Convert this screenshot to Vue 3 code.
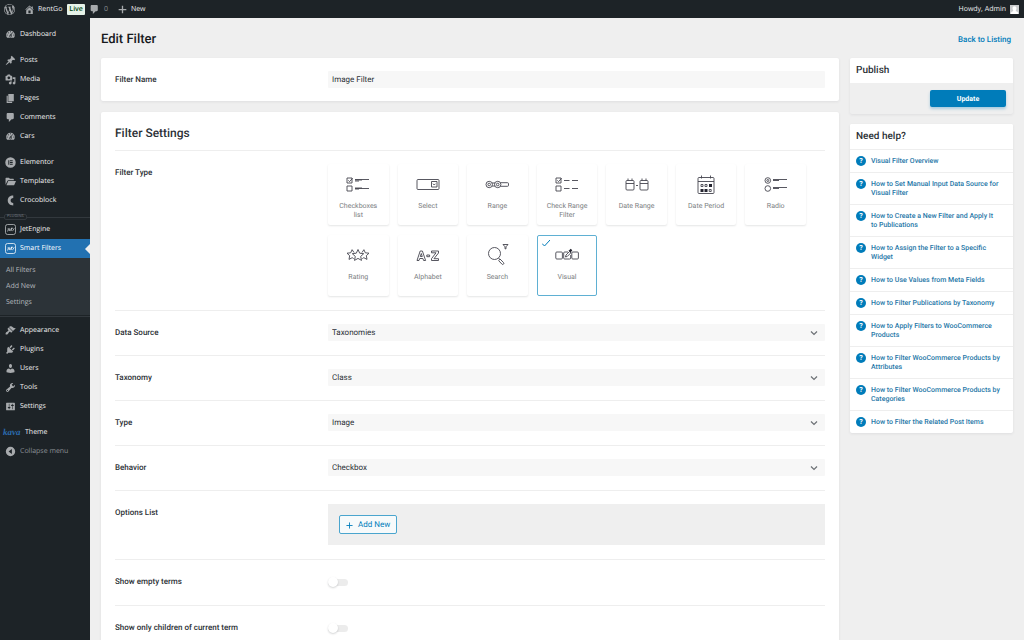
<script setup>
import { ref } from 'vue'

const icons = {
  wordpress: 'M20 10c0-5.51-4.49-10-10-10C4.48 0 0 4.49 0 10c0 5.52 4.48 10 10 10 5.51 0 10-4.48 10-10zM7.78 15.37L4.37 6.22c.55-.02 1.17-.08 1.17-.08.5-.06.44-1.13-.06-1.11 0 0-1.45.11-2.37.11-.18 0-.37 0-.58-.01C4.12 2.69 6.87 1.11 10 1.11c2.33 0 4.45.87 6.05 2.34-.68-.11-1.65.39-1.65 1.58 0 .74.45 1.36.9 2.1.35.61.55 1.36.55 2.46 0 1.49-1.4 5-1.4 5l-3.03-8.37c.54-.02.82-.17.82-.17.5-.05.44-1.25-.06-1.22 0 0-1.44.12-2.38.12-.87 0-2.33-.12-2.33-.12-.5-.03-.56 1.2-.06 1.22l.92.08 1.26 3.41zM17.41 10c.24-.64.74-1.87.43-4.25.7 1.29 1.05 2.71 1.05 4.25 0 3.29-1.73 6.24-4.4 7.78.97-2.59 1.94-5.2 2.92-7.78zM6.1 18.09C3.12 16.65 1.11 13.53 1.11 10c0-1.3.23-2.48.72-3.59C3.25 10.3 4.67 14.2 6.1 18.09zm4.03-6.63l2.58 6.98c-.86.29-1.76.45-2.71.45-.79 0-1.57-.11-2.29-.33.81-2.38 1.62-4.74 2.42-7.1z',
  home: 'M16 8.5l1.53 1.53-1.06 1.06L10 4.6l-6.47 6.49-1.06-1.06L10 2.5l4 4v-2h2v4zm-6-2.46l6 5.99V18H4v-5.97zM12 17v-5H8v5h4z',
  plus: 'M17 9v2.4h-5.8V17H8.8v-5.6H3V9h5.8V3h2.4v6z',
  dashboard: 'M3.76 16h12.48c1.1-1.37 1.76-3.11 1.76-5 0-4.42-3.58-8-8-8s-8 3.58-8 8c0 1.89.66 3.63 1.76 5zM10 4c.55 0 1 .45 1 1s-.45 1-1 1-1-.45-1-1 .45-1 1-1zM6 6c.55 0 1 .45 1 1s-.45 1-1 1-1-.45-1-1 .45-1 1-1zm8 0c.55 0 1 .45 1 1s-.45 1-1 1-1-.45-1-1 .45-1 1-1zm-5.37 5.55L12 7v6c0 1.1-.9 2-2 2s-2-.9-2-2c0-.57.24-1.08.63-1.45zM4 10c.55 0 1 .45 1 1s-.45 1-1 1-1-.45-1-1 .45-1 1-1zm12 0c.55 0 1 .45 1 1s-.45 1-1 1-1-.45-1-1 .45-1 1-1zm-5 3c0-.55-.45-1-1-1s-1 .45-1 1 .45 1 1 1 1-.45 1-1z',
  post: 'M10.44 3.02l1.82-1.82 6.36 6.35-1.83 1.82c-1.05-.68-2.48-.57-3.41.36l-.75.75c-.92.93-1.04 2.35-.35 3.41l-1.83 1.82-2.41-2.41-2.8 2.79c-.42.42-3.38 2.71-3.8 2.29s1.86-3.39 2.28-3.81l2.79-2.79L4.1 9.36l1.83-1.82c1.05.69 2.48.57 3.4-.36l.75-.75c.93-.92 1.05-2.35.36-3.41z',
  media: 'M13 11V4c0-.55-.45-1-1-1h-1.67L9 1H5L3.67 3H2c-.55 0-1 .45-1 1v7c0 .55.45 1 1 1h10c.55 0 1-.45 1-1zM7 4.5c1.38 0 2.5 1.12 2.5 2.5S8.38 9.5 7 9.5 4.5 8.38 4.5 7 5.62 4.5 7 4.5zM14 6h5v10.5c0 1.38-1.12 2.5-2.5 2.5S14 17.88 14 16.5s1.12-2.5 2.5-2.5c.17 0 .34.02.5.05V9h-3V6zm-4 8.05V13h2v3.5c0 1.38-1.12 2.5-2.5 2.5S7 17.88 7 16.5 8.12 14 9.5 14c.17 0 .34.02.5.05z',
  page: 'M6 15V2h10v13H6zm-1 1h8v2H3V5h2v11z',
  comment: 'M5 2h9c1.1 0 2 .9 2 2v7c0 1.1-.9 2-2 2h-2l-5 5v-5H5c-1.1 0-2-.9-2-2V4c0-1.1.9-2 2-2z',
  elementor: 'M10 0.5a9.5 9.5 0 1 0 0 19a9.5 9.5 0 1 0 0-19zM6 5.8h1.8v8.4H6zM9 5.8h5v1.8H9zM9 9.1h5v1.8H9zM9 12.4h5v1.8H9z',
  templates: 'M1 16V4c0-.6.4-1 1-1h5l2 2h6c.6 0 1 .4 1 1v1.6H6.2c-.8 0-1.4.4-1.7 1.1zM6.6 9H20l-3.2 7.2c-.2.5-.6.8-1.2.8H2.6L5.5 9.8c.2-.5.6-.8 1.1-.8z',
  croco: 'M15 1v4.4c-3 0-4.8 1.8-4.8 4.6s1.800 4.600 4.800 4.600V19C9 19 5 15.400 5 10S9 1 15 1z',
  appearance: 'M14.48 11.06L7.41 3.99l1.5-1.5c.5-.56 2.3-.47 3.51.32 1.21.8 1.43 1.28 2.91 2.1 1.18.64 2.45 1.26 4.45.85zm-.71.71L6.7 4.7 4.93 6.47c-.39.39-.39 1.02 0 1.41l1.06 1.06c.39.39.39 1.03 0 1.42-.6.6-1.43 1.11-2.21 1.69-.35.26-.7.53-1.01.84C1.43 14.23.4 16.08 1.4 17.07c.99 1 2.84-.03 4.18-1.36.31-.31.58-.66.85-1.02.57-.78 1.08-1.61 1.69-2.21.39-.39 1.02-.39 1.41 0l1.06 1.06c.39.39 1.02.39 1.41 0z',
  plugins: 'M13.11 4.36L9.87 7.6 8 5.73l3.24-3.24c.35-.34 1.05-.2 1.56.32.52.51.66 1.21.31 1.55zm-8 1.77l.91-1.12 9.01 9.01-1.19.84c-.71.71-2.63 1.16-3.82 1.16H6.14L4.9 17.26c-.59.59-1.54.59-2.12 0-.59-.58-.59-1.53 0-2.12l1.24-1.24v-3.88c0-1.13.4-3.19 1.09-3.89zm7.26 3.97l3.24-3.24c.34-.35 1.04-.21 1.55.31.52.51.66 1.21.31 1.55l-3.24 3.25z',
  users: 'M10 9.25c-2.27 0-2.73-3.44-2.73-3.44C7 4.02 7.82 2 9.97 2c2.16 0 2.98 2.02 2.71 3.81 0 0-.41 3.44-2.68 3.44zm0 2.57L12.72 10c2.39 0 4.52 2.33 4.52 4.53v2.49s-3.65 1.13-7.24 1.13c-3.65 0-7.24-1.13-7.24-1.13v-2.49c0-2.25 1.94-4.48 4.47-4.48z',
  tools: 'M16.68 9.77c-1.34 1.34-3.3 1.67-4.95.99l-5.41 6.52c-.99.99-2.59.99-3.58 0s-.99-2.59 0-3.57l6.52-5.42c-.68-1.65-.35-3.61.99-4.95 1.28-1.28 3.12-1.62 4.72-1.06l-2.89 2.89 2.82 2.82 2.86-2.87c.53 1.58.18 3.39-1.08 4.65zM3.81 16.21c.4.39 1.04.39 1.43 0 .4-.4.4-1.04 0-1.43-.39-.4-1.03-.4-1.43 0-.39.39-.39 1.03 0 1.43z',
  settings: 'M18 16V4c0-.55-.45-1-1-1H3c-.55 0-1 .45-1 1v12c0 .55.45 1 1 1h14c.55 0 1-.45 1-1zM8 11h1c.55 0 1 .45 1 1s-.45 1-1 1H8v1.500c0 .28-.22.5-.5.5s-.5-.22-.5-.5V13H6c-.55 0-1-.45-1-1s.45-1 1-1h1V5.500c0-.28.22-.5.5-.5s.5.22.5.5V11zm5-2h-1c-.55 0-1-.45-1-1s.45-1 1-1h1V5.500c0-.28.22-.5.5-.5s.5.22.5.5V7h1c.55 0 1 .45 1 1s-.45 1-1 1h-1v5.500c0 .28-.22.5-.5.5s-.5-.22-.5-.5V9z',
  collapse: 'M10 1.500a8.500 8.500 0 1 0 0 17a8.500 8.500 0 1 0 0-17zM12.500 5.500v9L6.500 10z'
}

const groups = [
  [{ label: 'Dashboard', icon: 'dashboard' }],
  [
    { label: 'Posts', icon: 'post' },
    { label: 'Media', icon: 'media' },
    { label: 'Pages', icon: 'page' },
    { label: 'Comments', icon: 'comment' },
    { label: 'Cars', icon: 'dashboard' }
  ],
  [
    { label: 'Elementor', icon: 'elementor' },
    { label: 'Templates', icon: 'templates' },
    { label: 'Crocoblock', icon: 'croco' }
  ]
]
const plugins = [{ label: 'JetEngine' }, { label: 'Smart Filters', active: true }]
const submenu = ['All Filters', 'Add New', 'Settings']
const system = [
  { label: 'Appearance', icon: 'appearance' },
  { label: 'Plugins', icon: 'plugins' },
  { label: 'Users', icon: 'users' },
  { label: 'Tools', icon: 'tools' },
  { label: 'Settings', icon: 'settings' }
]

/* Line drawings on a 24 x 22 canvas; "fill" holds the solid parts */
const types = [
  { label: 'Checkboxes list', line: 'M1 5h5v5h-5zM1 13h5v5h-5zM2.300 7.400l1.300 1.200 3-3.400M9 7h7M9 8h4M9 6.500h14M9 15h7M9 16h4M9 15.500h14' },
  { label: 'Select', line: 'M2 6.500h20a1 1 0 0 1 1 1v8a1 1 0 0 1-1 1h-20a1 1 0 0 1-1-1v-8a1 1 0 0 1 1-1zM15.500 8.500h5.500v5.500h-5.500zM17 10.700l1.200 1.300 1.300-1.300' },
  { label: 'Range', line: 'M1 11.500a3.200 3.200 0 1 0 6.400 0a3.200 3.200 0 1 0-6.400 0M2.900 11.500a1.300 1.300 0 1 0 2.600 0a1.300 1.300 0 1 0-2.600 0M9.500 11.500a3.200 3.200 0 1 0 6.400 0a3.200 3.200 0 1 0-6.400 0M11.400 11.500a1.300 1.300 0 1 0 2.600 0a1.300 1.300 0 1 0-2.600 0M7 10h3M7 13h3M15.500 9.700h7a1 1 0 0 1 1 1v1.600a1 1 0 0 1-1 1h-7' },
  { label: 'Check Range Filter', line: 'M1 5h5v5h-5zM1 13h5v5h-5zM2.300 7.400l1.300 1.200 3-3.400M9 7.500h5.500M17 7.500h6M9 15.500h5.500M17 15.500h6' },
  { label: 'Date Range', line: 'M2 7.500h6a1 1 0 0 1 1 1v7.500a1 1 0 0 1-1 1h-6a1 1 0 0 1-1-1v-7.500a1 1 0 0 1 1-1zM1 10.500h8M3 5.500v2M7 5.500v2M11 12.500h2M16 7.500h6a1 1 0 0 1 1 1v7.500a1 1 0 0 1-1 1h-6a1 1 0 0 1-1-1v-7.500a1 1 0 0 1 1-1zM15 10.500h8M17 5.500v2M21 5.500v2' },
  { label: 'Date Period', line: 'M5 4.500h14a1 1 0 0 1 1 1v14a1 1 0 0 1-1 1h-14a1 1 0 0 1-1-1v-14a1 1 0 0 1 1-1zM4 8.500h16M7.500 2.500v3M16.500 2.500v3M7 11.500h2v2h-2zM11 11.500h2v2h-2zM15.200 16.500h2v2h-2z', fill: 'M15 11h3v3h-3zM6.500 16h3v3h-3zM10.500 16h3v3h-3z' },
  { label: 'Radio', line: 'M1 7.500a2.800 2.800 0 1 0 5.600 0a2.800 2.800 0 1 0-5.600 0M2.800 7.500a1 1 0 1 0 2 0a1 1 0 1 0-2 0M1 15.500a2.800 2.800 0 1 0 5.600 0a2.800 2.800 0 1 0-5.600 0M9 6.500h14M9 7.500h6M9 14.500h14M9 15.500h6' },
  { label: 'Rating', line: 'M12 5.500l1.700 3.700 4 .5-3 2.700.8 4-3.500-2-3.500 2 .8-4-3-2.700 4-.5zM8 8.500l-1.900-2.800-1.400 3.100-3.700.4 2.700 2.500-.7 3.700 3.200-1.700 1.500.9M16 8.500l1.900-2.800 1.400 3.100 3.700.4-2.700 2.500.7 3.700-3.200-1.700-1.500.9' },
  { label: 'Alphabet', line: 'M1 16.500l3.200-9.500h2.200l3.200 9.500h-2l-.7-2h-3.200l-.7 2zM4.300 12.500l1-3 1 3zM10.800 11h2.800v1.700h-2.800zM15.500 7h7v2l-4.500 5.700h4.500v1.800h-7v-1.800l4.500-5.900h-4.500z' },
  { label: 'Search', line: 'M3.500 9.500a6 6 0 1 0 12 0a6 6 0 1 0-12 0M13.500 14l1.500 1.500M15 15l3.500 3.500a1 1 0 0 1-1.600 1.600l-3.200-3.400zM18 .5h5l-2 2.300v2h-1v-2z' },
  { label: 'Visual', line: 'M1.800 8h4.600a1 1 0 0 1 1 1v5a1 1 0 0 1-1 1h-4.600a1 1 0 0 1-1-1v-5a1 1 0 0 1 1-1zM13 8h-3.300a1 1 0 0 0-1 1v5a1 1 0 0 0 1 1h5a1 1 0 0 0 1-1v-3M17.800 8h4.600a1 1 0 0 1 1 1v5a1 1 0 0 1-1 1h-4.600a1 1 0 0 1-1-1v-5a1 1 0 0 1 1-1zM10.500 13l.5-2 3.500-3.500 1.300 1.400-3.500 3.500z', fill: 'M13.500 6.500l1-.5 1.200-1.300 1.600 1.500-1 1.300-.3 1.500z' }
]
const filterType = ref('Visual')
const name = ref('Image Filter')

const selects = [
  { id: 'source', label: 'Data Source', value: 'Taxonomies' },
  { id: 'taxonomy', label: 'Taxonomy', value: 'Class' },
  { id: 'type', label: 'Type', value: 'Image' },
  { id: 'behavior', label: 'Behavior', value: 'Checkbox' }
]
const toggles = [
  { id: 'empty', label: 'Show empty terms' },
  { id: 'children', label: 'Show only children of current term' }
]
const help = [
  'Visual Filter Overview',
  'How to Set Manual Input Data Source for Visual Filter',
  'How to Create a New Filter and Apply It to\u00a0Publications',
  'How to Assign the Filter to a Specific Widget',
  'How to Use Values from Meta Fields',
  'How to Filter Publications by Taxonomy',
  'How to Apply Filters to WooCommerce Products',
  'How to Filter WooCommerce Products by Attributes',
  'How to Filter WooCommerce Products by Categories',
  'How to Filter the Related Post Items'
]
</script>

<template>
  <div class="screen">
    <header class="bar">
      <a href="#" aria-label="WordPress"><svg class="ico" viewBox="0 0 20 20"><path :d="icons.wordpress" /></svg></a>
      <a href="#" class="site"><svg class="ico" viewBox="0 0 20 20"><path fill-rule="evenodd" :d="icons.home" /></svg>RentGo<span class="live">Live</span></a>
      <a href="#" class="count"><svg class="ico" viewBox="0 0 20 20"><path :d="icons.comment" /></svg>0</a>
      <a href="#" class="new"><svg class="ico" viewBox="0 0 20 20"><path :d="icons.plus" /></svg>New</a>
      <a href="#" class="user">Howdy, Admin
        <svg class="avatar" viewBox="0 0 10 10"><path fill="#c9cbcd" d="M0 0h10v10H0z" /><path fill="#fff" d="M5 1.500c1.500 0 2.200 1 2.200 2.300S6.300 6 6.300 6.300C6.300 7 9 7 9 9v1H1V9c0-2 2.700-2 2.700-2.700 0-.3-.9-1.200-.9-2.500S3.500 1.500 5 1.500z" /></svg>
      </a>
    </header>

    <div class="body">
      <nav class="side">
        <div v-for="(g, i) in groups" :key="i" class="group">
          <a v-for="m in g" :key="m.label" href="#" class="item">
            <svg class="ico" viewBox="0 0 20 20"><path fill-rule="evenodd" :d="icons[m.icon]" /></svg>{{ m.label }}
          </a>
        </div>
        <div class="divider"><span>PLUGINS</span></div>
        <a v-for="p in plugins" :key="p.label" href="#" class="item" :class="{ active: p.active }">
          <svg class="ico jet" viewBox="0 0 22 22">
            <rect x="1" y="1" width="20" height="20" rx="4" />
            <path d="M4 14c2.500 1 2.500-1 2.500-6M7.500 11.500c2 1 4-1 2.500-2s-3.500 3 0 4c1.500 0 2-1 3-5.500M12 8.500h4M13 8.500c-.5 3-.5 5 1.500 5M15.500 13.500l3-5" />
          </svg>{{ p.label }}
        </a>
        <div class="submenu">
          <a v-for="s in submenu" :key="s" href="#">{{ s }}</a>
        </div>
        <div class="group last">
          <a v-for="m in system" :key="m.label" href="#" class="item">
            <svg class="ico" viewBox="0 0 20 20"><path fill-rule="evenodd" :d="icons[m.icon]" /></svg>{{ m.label }}
          </a>
        </div>
        <a href="#" class="item theme"><span class="kava">kava</span>Theme</a>
        <button type="button" class="item collapse">
          <svg class="ico" viewBox="0 0 20 20"><path fill-rule="evenodd" :d="icons.collapse" /></svg>Collapse menu
        </button>
      </nav>

      <main class="page">
        <div class="head">
          <h1>Edit Filter</h1>
          <a href="#">Back to Listing</a>
        </div>

        <div class="columns">
          <div class="content">
            <section class="card">
              <div class="row name">
                <label class="label" for="name">Filter Name</label>
                <input id="name" v-model="name" type="text" class="field" />
              </div>
            </section>

            <section class="card settings">
              <h2>Filter Settings</h2>
              <div class="row">
                <span id="filter-type" class="label">Filter Type</span>
                <div class="control">
                  <div class="tiles" role="radiogroup" aria-labelledby="filter-type">
                    <label v-for="t in types" :key="t.label" class="tile" :class="{ selected: filterType === t.label }">
                      <input v-model="filterType" type="radio" name="filter-type" :value="t.label" />
                      <svg v-if="filterType === t.label" class="check" viewBox="0 0 8 8"><path d="M0 4.500l2.500 2.500 5.500-6" /></svg>
                      <svg class="art" viewBox="0 0 24 22">
                        <path class="line" :d="t.line" />
                        <path v-if="t.fill" class="solid" :d="t.fill" />
                      </svg>
                      <span>{{ t.label }}</span>
                    </label>
                  </div>
                </div>
              </div>

              <div v-for="s in selects" :key="s.id" class="row">
                <label class="label" :for="s.id">{{ s.label }}</label>
                <div class="control picker">
                  <select :id="s.id" class="field"><option>{{ s.value }}</option></select>
                  <svg viewBox="0 0 8 6"><path d="M1 1.500l3 3 3-3" /></svg>
                </div>
              </div>

              <div class="row">
                <span class="label">Options List</span>
                <div class="control options">
                  <button type="button" class="add">
                    <svg viewBox="0 0 8 8"><path d="M4 0.500v7M0.500 4h7" /></svg>Add New
                  </button>
                </div>
              </div>

              <div v-for="t in toggles" :key="t.id" class="row">
                <label class="label" :for="t.id">{{ t.label }}</label>
                <div class="control switch"><input :id="t.id" type="checkbox" /></div>
              </div>
            </section>
          </div>

          <aside class="aside">
            <section class="publish">
              <h2>Publish</h2>
              <div class="actions"><button type="button">Update</button></div>
            </section>
            <section class="help">
              <h2>Need help?</h2>
              <ul>
                <li v-for="h in help" :key="h">
                  <span class="mark" aria-hidden="true">?</span><a href="#">{{ h }}</a>
                </li>
              </ul>
            </section>
          </aside>
        </div>
      </main>
    </div>
  </div>
</template>

<style>
body {
  background: #efefef;
}
</style>

<style scoped>
* {
  box-sizing: border-box;
}
.screen {
  height: 100vh;
  overflow: hidden;
  display: flex;
  flex-direction: column;
  background: #efefef;
  color: #2c3136;
  font: 8px/10px Roboto, sans-serif;
  text-rendering: geometricPrecision;
}
a {
  color: inherit;
  text-decoration: none;
}
h1,
h2,
ul {
  margin: 0;
  padding: 0;
  font-weight: 500;
  list-style: none;
}
button,
input,
select {
  font: inherit;
  text-rendering: inherit;
  margin: 0;
  border: 0;
}
svg {
  display: block;
  flex: none;
}

.bar {
  flex: none;
  height: 18px;
  padding: 0 5px 0 4px;
  display: flex;
  align-items: center;
  background: #1d2327;
  color: #f0f0f1;
  font: 7px/11px "Open Sans", "Noto Sans", sans-serif;
}
.bar a {
  display: flex;
  align-items: center;
}
.ico {
  width: 11px;
  height: 11px;
  fill: #a7aaad;
}
.site {
  margin-left: 9px;
  gap: 3px;
}
.live {
  margin-left: 2px;
  padding: 0 2px;
  border-radius: 1px;
  background: #e6f2e8;
  color: #00450c;
  font-weight: 600;
}
.count {
  margin-left: 4px;
  gap: 4px;
  color: #8c9095;
}
.new {
  margin-left: 9px;
  gap: 3px;
}
.bar .user {
  margin-left: auto;
  gap: 4px;
}
.avatar {
  width: 9px;
  height: 9px;
}

.body {
  flex: 1;
  min-height: 0;
  display: flex;
}
.side {
  flex: none;
  width: 90px;
  padding-top: 7px;
  background: #1d2327;
  font: 7px/11px "Open Sans", "Noto Sans", sans-serif;
}
.group {
  margin-bottom: 7px;
}
.item {
  position: relative;
  width: 100%;
  height: 19px;
  padding: 0 5px;
  display: flex;
  align-items: center;
  gap: 4px;
  color: #f0f0f1;
}
.divider {
  position: relative;
  height: 3px;
  border-top: 1px solid #32383d;
}
.divider span {
  position: absolute;
  left: 4px;
  top: -4px;
  padding: 0 2px;
  border: 1px solid #32383d;
  border-radius: 2px;
  background: #1d2327;
  color: #7c8287;
  font-size: 4px;
  line-height: 4px;
}
.active {
  background: #2271b1;
  color: #fff;
}
.active::after {
  content: "";
  position: absolute;
  right: 0;
  top: 5px;
  border: 5px solid transparent;
  border-left: 0;
  border-right-color: #efefef;
}
.jet {
  fill: none;
  stroke: #c3c7ca;
  stroke-width: 1.500;
}
.active .jet {
  stroke: #fff;
}
.submenu {
  padding: 5px 0 4px 6px;
  background: #2c3338;
  color: #b4b9be;
  line-height: 10px;
}
.submenu a {
  display: block;
  padding: 3px 0;
}
.last {
  margin-top: 1px;
  padding-top: 4px;
  border-top: 1px solid #32383d;
}
.theme {
  padding-left: 3px;
}
.kava {
  width: 18px;
  color: #2b6cb0;
  font: italic bold 9px/11px "Liberation Serif", serif;
}
.collapse {
  background: none;
  color: #8c9095;
}

.page {
  flex: 1;
  min-width: 0;
  padding: 14px 11px 0;
}
.head {
  display: flex;
  justify-content: space-between;
  align-items: center;
  padding-right: 2px;
}
h1 {
  color: #16191c;
  font-size: 13px;
  line-height: 16px;
}
.head a {
  color: #007cba;
  font-weight: 500;
}
.columns {
  margin-top: 10px;
  display: flex;
  align-items: flex-start;
  gap: 11px;
}
.content {
  flex: 1;
  min-width: 0;
  display: flex;
  flex-direction: column;
  gap: 11px;
}
.card,
.publish,
.help {
  border-radius: 2px;
  box-shadow: 0 1px 3px rgba(35, 40, 45, 0.08);
}
.card {
  padding: 0 14px;
  background: #fff;
}
.settings h2 {
  font-size: 12px;
  line-height: 14px;
  padding: 14px 0 10px;
}
.row {
  display: flex;
  padding: 13px 0 14px;
  border-top: 1px solid #eeeeee;
}
.row.name {
  border-top: 0;
  padding: 13px 0;
}
.label {
  width: 30%;
  flex: none;
  padding-top: 4px;
  font-weight: 500;
}
.control {
  flex: 1;
  min-width: 0;
}
.field {
  flex: 1;
  width: 100%;
  height: 17px;
  padding: 0 4px;
  border-radius: 1px;
  background: #f7f7f7;
  color: #2c3136;
  appearance: none;
}
.tiles {
  max-width: 478px;
  display: grid;
  grid-template-columns: repeat(7, 1fr);
  gap: 10px 9px;
}
.tile {
  position: relative;
  height: 61px;
  padding: 8px 8px 0;
  display: flex;
  flex-direction: column;
  align-items: center;
  gap: 7px;
  border: 1px solid transparent;
  border-radius: 2px;
  box-shadow: 0 1px 2px rgba(35, 40, 45, 0.12);
  color: #7b7e81;
  font-size: 7px;
  line-height: 9px;
  text-align: center;
}
.tile input {
  position: absolute;
  opacity: 0;
}
.selected {
  border-color: #5fb0d3;
  box-shadow: none;
}
.art {
  width: 24px;
  height: 22px;
}
.line {
  fill: none;
  stroke: #45454f;
  stroke-width: 0.900;
}
.solid {
  fill: #23232f;
}
.check {
  position: absolute;
  left: 4px;
  top: 3px;
  width: 8px;
  height: 8px;
  fill: none;
  stroke: #007cba;
}
.picker {
  position: relative;
}
.picker select {
  display: block;
}
.picker svg {
  position: absolute;
  right: 7px;
  top: 6px;
  width: 8px;
  height: 6px;
  fill: none;
  stroke: #6c7075;
  stroke-width: 1.200;
}
.options {
  padding: 11px;
  background: #efefef;
}
.add {
  height: 19px;
  padding: 1px 6px 0;
  display: flex;
  align-items: center;
  gap: 5px;
  border: 1px solid #4aa5ce;
  border-radius: 2px;
  background: #f7fafb;
  color: #007cba;
}
.add svg {
  width: 7px;
  height: 7px;
  stroke: #007cba;
}
.switch {
  padding-top: 4px;
}
.switch input {
  position: relative;
  display: block;
  width: 20px;
  height: 7px;
  margin: 2px 0 5px;
  border-radius: 4px;
  background: #ececec;
  appearance: none;
}
.switch input::before {
  content: "";
  position: absolute;
  left: 0;
  top: -2px;
  width: 10px;
  height: 10px;
  border-radius: 50%;
  background: #fff;
  box-shadow: 0 1px 2px rgba(35, 40, 45, 0.2);
}

.aside {
  flex: none;
  width: 163px;
  display: flex;
  flex-direction: column;
  gap: 10px;
}
.aside h2 {
  padding: 6px 6px 5px;
  background: #fff;
  border-radius: 2px 2px 0 0;
  font-size: 10px;
  line-height: 14px;
}
.actions {
  padding: 7px;
  display: flex;
  justify-content: flex-end;
}
.actions button {
  width: 76px;
  height: 17px;
  border-radius: 2px;
  background: #007cba;
  box-shadow: 0 2px 3px rgba(0, 124, 186, 0.3);
  color: #fff;
  font-size: 7px;
  font-weight: 700;
}
.help {
  background: #fff;
}
.help li {
  display: flex;
  align-items: flex-start;
  gap: 5px;
  padding: 7px 6px 6px;
  border-top: 1px solid #eeeeee;
  color: #1f78a8;
  font-size: 7px;
  line-height: 9px;
}
.mark {
  flex: none;
  width: 10px;
  height: 10px;
  margin-top: -1px;
  border-radius: 50%;
  background: #007cba;
  color: #fff;
  font-weight: 700;
  line-height: 10px;
  text-align: center;
}
</style>
